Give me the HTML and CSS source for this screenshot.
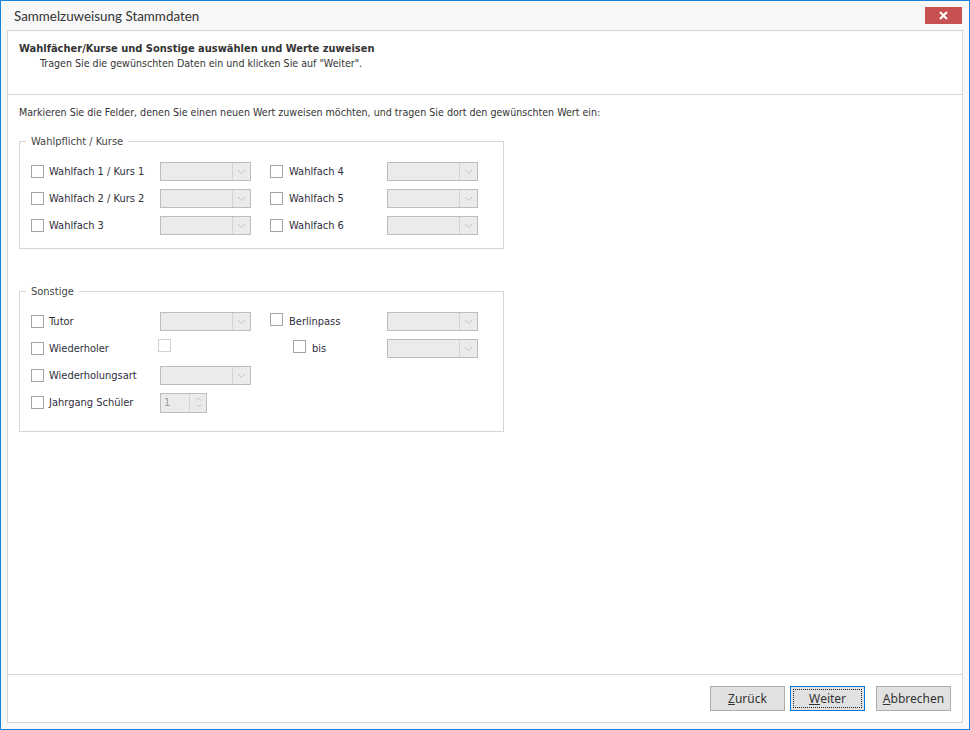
FILE: index.html
```html
<!DOCTYPE html>
<html lang="de">
<head>
<meta charset="utf-8">
<title>Sammelzuweisung Stammdaten</title>
<link rel="stylesheet" href="styles.css">
</head>
<body>
<div class="window">
  <div class="titlebar">
    <span class="title">Sammelzuweisung Stammdaten</span>
    <button class="close" aria-label="Schließen">
      <svg width="13" height="9" viewBox="0 0 13 9"><path d="M3 1 L10 8 M10 1 L3 8" stroke="#fff" stroke-width="2.2" fill="none"/></svg>
    </button>
  </div>
  <div class="panel">
    <div class="header">
      <div class="h-title">Wahlfächer/Kurse und Sonstige auswählen und Werte zuweisen</div>
      <div class="h-sub">Tragen Sie die gewünschten Daten ein und klicken Sie auf "Weiter".</div>
    </div>
    <div class="content">
      <p class="intro">Markieren Sie die Felder, denen Sie einen neuen Wert zuweisen möchten, und tragen Sie dort den gewünschten Wert ein:</p>

      <div class="group g1">
        <span class="legend">Wahlpflicht / Kurse</span>
        <div class="grid">
          <span class="cb"></span><span class="lbl">Wahlfach 1 / Kurs 1</span><span class="combo"><span class="btn"><svg width="9" height="6" viewBox="0 0 9 6"><path d="M1 1 L4.5 4.5 L8 1" stroke="#c4c4c4" fill="none"/></svg></span></span>
          <span></span>
          <span class="cb"></span><span class="lbl">Wahlfach 4</span><span class="combo"><span class="btn"><svg width="9" height="6" viewBox="0 0 9 6"><path d="M1 1 L4.5 4.5 L8 1" stroke="#c4c4c4" fill="none"/></svg></span></span>

          <span class="cb"></span><span class="lbl">Wahlfach 2 / Kurs 2</span><span class="combo"><span class="btn"><svg width="9" height="6" viewBox="0 0 9 6"><path d="M1 1 L4.5 4.5 L8 1" stroke="#c4c4c4" fill="none"/></svg></span></span>
          <span></span>
          <span class="cb"></span><span class="lbl">Wahlfach 5</span><span class="combo"><span class="btn"><svg width="9" height="6" viewBox="0 0 9 6"><path d="M1 1 L4.5 4.5 L8 1" stroke="#c4c4c4" fill="none"/></svg></span></span>

          <span class="cb"></span><span class="lbl">Wahlfach 3</span><span class="combo"><span class="btn"><svg width="9" height="6" viewBox="0 0 9 6"><path d="M1 1 L4.5 4.5 L8 1" stroke="#c4c4c4" fill="none"/></svg></span></span>
          <span></span>
          <span class="cb"></span><span class="lbl">Wahlfach 6</span><span class="combo"><span class="btn"><svg width="9" height="6" viewBox="0 0 9 6"><path d="M1 1 L4.5 4.5 L8 1" stroke="#c4c4c4" fill="none"/></svg></span></span>
        </div>
      </div>

      <div class="group g2">
        <span class="legend">Sonstige</span>
        <div class="grid">
          <span class="cb"></span><span class="lbl">Tutor</span><span class="combo"><span class="btn"><svg width="9" height="6" viewBox="0 0 9 6"><path d="M1 1 L4.5 4.5 L8 1" stroke="#c4c4c4" fill="none"/></svg></span></span>
          <span></span>
          <span class="cb up"></span><span class="lbl">Berlinpass</span><span class="combo"><span class="btn"><svg width="9" height="6" viewBox="0 0 9 6"><path d="M1 1 L4.5 4.5 L8 1" stroke="#c4c4c4" fill="none"/></svg></span></span>

          <span class="cb"></span><span class="lbl">Wiederholer</span><span class="cell"><span class="cb small"></span></span>
          <span></span>
          <span class="bis"><span class="cb up"></span><span class="lbl">bis</span></span><span class="combo"><span class="btn"><svg width="9" height="6" viewBox="0 0 9 6"><path d="M1 1 L4.5 4.5 L8 1" stroke="#c4c4c4" fill="none"/></svg></span></span>

          <span class="cb"></span><span class="lbl">Wiederholungsart</span><span class="combo"><span class="btn"><svg width="9" height="6" viewBox="0 0 9 6"><path d="M1 1 L4.5 4.5 L8 1" stroke="#c4c4c4" fill="none"/></svg></span></span>
          <span class="rest"></span>

          <span class="cb"></span><span class="lbl">Jahrgang Schüler</span><span class="cell"><span class="spin"><span class="val">1</span><span class="arrows"><svg width="7" height="13" viewBox="0 0 7 13"><path d="M1 4.5 L3.5 2 L6 4.5 M1 8.5 L3.5 11 L6 8.5" stroke="#c4c4c4" fill="none"/></svg></span></span></span>
          <span class="rest"></span>
        </div>
      </div>
    </div>
    <div class="footer">
      <button class="b"><u>Z</u>urück</button>
      <button class="b focus"><span class="fr"><u>W</u>eiter</span></button>
      <button class="b last"><u>A</u>bbrechen</button>
    </div>
  </div>
</div>
</body>
</html>
```

FILE: styles.css
```css
* { box-sizing: border-box; }
html, body { margin: 0; padding: 0; }
body { font-family: Tahoma, "DejaVu Sans Condensed", "Liberation Sans", sans-serif; font-size: 11px; color: #333; }

.window {
  width: 970px; height: 730px;
  border: 1px solid #1883d7;
  background: #f8f8f8;
  display: flex; flex-direction: column;
}

.titlebar {
  height: 29px; flex: none;
  display: flex; align-items: flex-start;
  padding: 0 7px 0 13px;
}
.title {
  font-family: Lato, "Noto Sans", sans-serif;
  font-size: 13.4px; color: #333; line-height: 31px;
  flex: 1;
}
.close {
  margin-top: 6px;
  width: 37px; height: 17px;
  border: 0; padding: 0;
  background: #c75050;
  display: flex; align-items: center; justify-content: center;
}

.panel {
  flex: 1;
  margin: 0 6px 6px 6px;
  border: 1px solid #d5d5d5;
  background: #fff;
  display: flex; flex-direction: column;
}

.header {
  height: 64px; flex: none;
  border-bottom: 1px solid #d5d5d5;
  padding: 10px 11px 0 11px;
}
.h-title { font-weight: bold; font-size: 11px; line-height: 15px; color: #333; }
.h-sub { padding-left: 21px; line-height: 15px; color: #333; font-size: 10.6px; }

.content { flex: 1; padding: 10px 11px 0 11px; }
.intro { margin: 0; line-height: 15px; color: #333; font-size: 10.6px; }

.group {
  position: relative;
  width: 485px;
  border: 1px solid #d5d5d5;
  padding: 16px 0 0 11px;
}
.g1 { margin-top: 21px; height: 108px; }
.g2 { margin-top: 42px; height: 141px; }

.legend {
  position: absolute; top: -8px; left: 6px;
  background: #fff; padding: 0 5px;
  line-height: 15px; color: #444;
}

.grid {
  display: grid;
  grid-template-columns: 18px 111px 91px 19px 19px 98px 91px;
  grid-auto-rows: 27px;
  align-items: center;
}
.rest { grid-column: 4 / 8; }

.cb {
  display: block;
  width: 13px; height: 13px;
  border: 1px solid #a4a4a4;
  background: #fff;
}
.cb.up { position: relative; top: -2px; }
.cb.small { border-color: #d2d2d2; margin-left: -2px; position: relative; top: -3px; }

.lbl { color: #2e2e3a; white-space: nowrap; line-height: 15px; }

.bis { grid-column: 5 / 7; display: flex; align-items: center; padding-left: 23px; }
.bis .cb { margin-right: 6px; }

.combo {
  display: flex; justify-content: flex-end;
  width: 91px; height: 19px;
  border: 1px solid #bdbdbd;
  background: #ebebeb;
}
.combo .btn {
  width: 18px; height: 100%;
  border-left: 1px solid #d4d4d4;
  display: flex; align-items: center; justify-content: center;
}

.cell { display: flex; align-items: center; }

.spin {
  display: flex;
  width: 47px; height: 20px;
  border: 1px solid #bdbdbd;
  background: #ebebeb;
}
.spin .val { flex: 1; color: #9a9a9a; padding-left: 3px; line-height: 18px; }
.spin .arrows {
  width: 17px;
  border-left: 1px solid #d4d4d4;
  display: flex; align-items: center; justify-content: center;
}

.footer {
  height: 48px; flex: none;
  border-top: 1px solid #d5d5d5;
  display: flex; justify-content: flex-end; align-items: flex-start;
  padding: 11px 11px 0 0;
  gap: 5px;
}
.b {
  width: 75px; height: 25px;
  border: 1px solid #adadad;
  background: #e1e1e1;
  font-family: "Noto Sans", "Open Sans", sans-serif;
  font-size: 12px; color: #333;
  padding: 0;
  display: flex; align-items: center; justify-content: center;
}
.b.last { margin-left: 6px; }
.b.focus { border-color: #0078d7; padding: 2px; }
.b.focus .fr {
  flex: 1; align-self: stretch;
  border: 1px dotted #222;
  display: flex; align-items: center; justify-content: center;
}
.b u { text-decoration: underline; }
```
